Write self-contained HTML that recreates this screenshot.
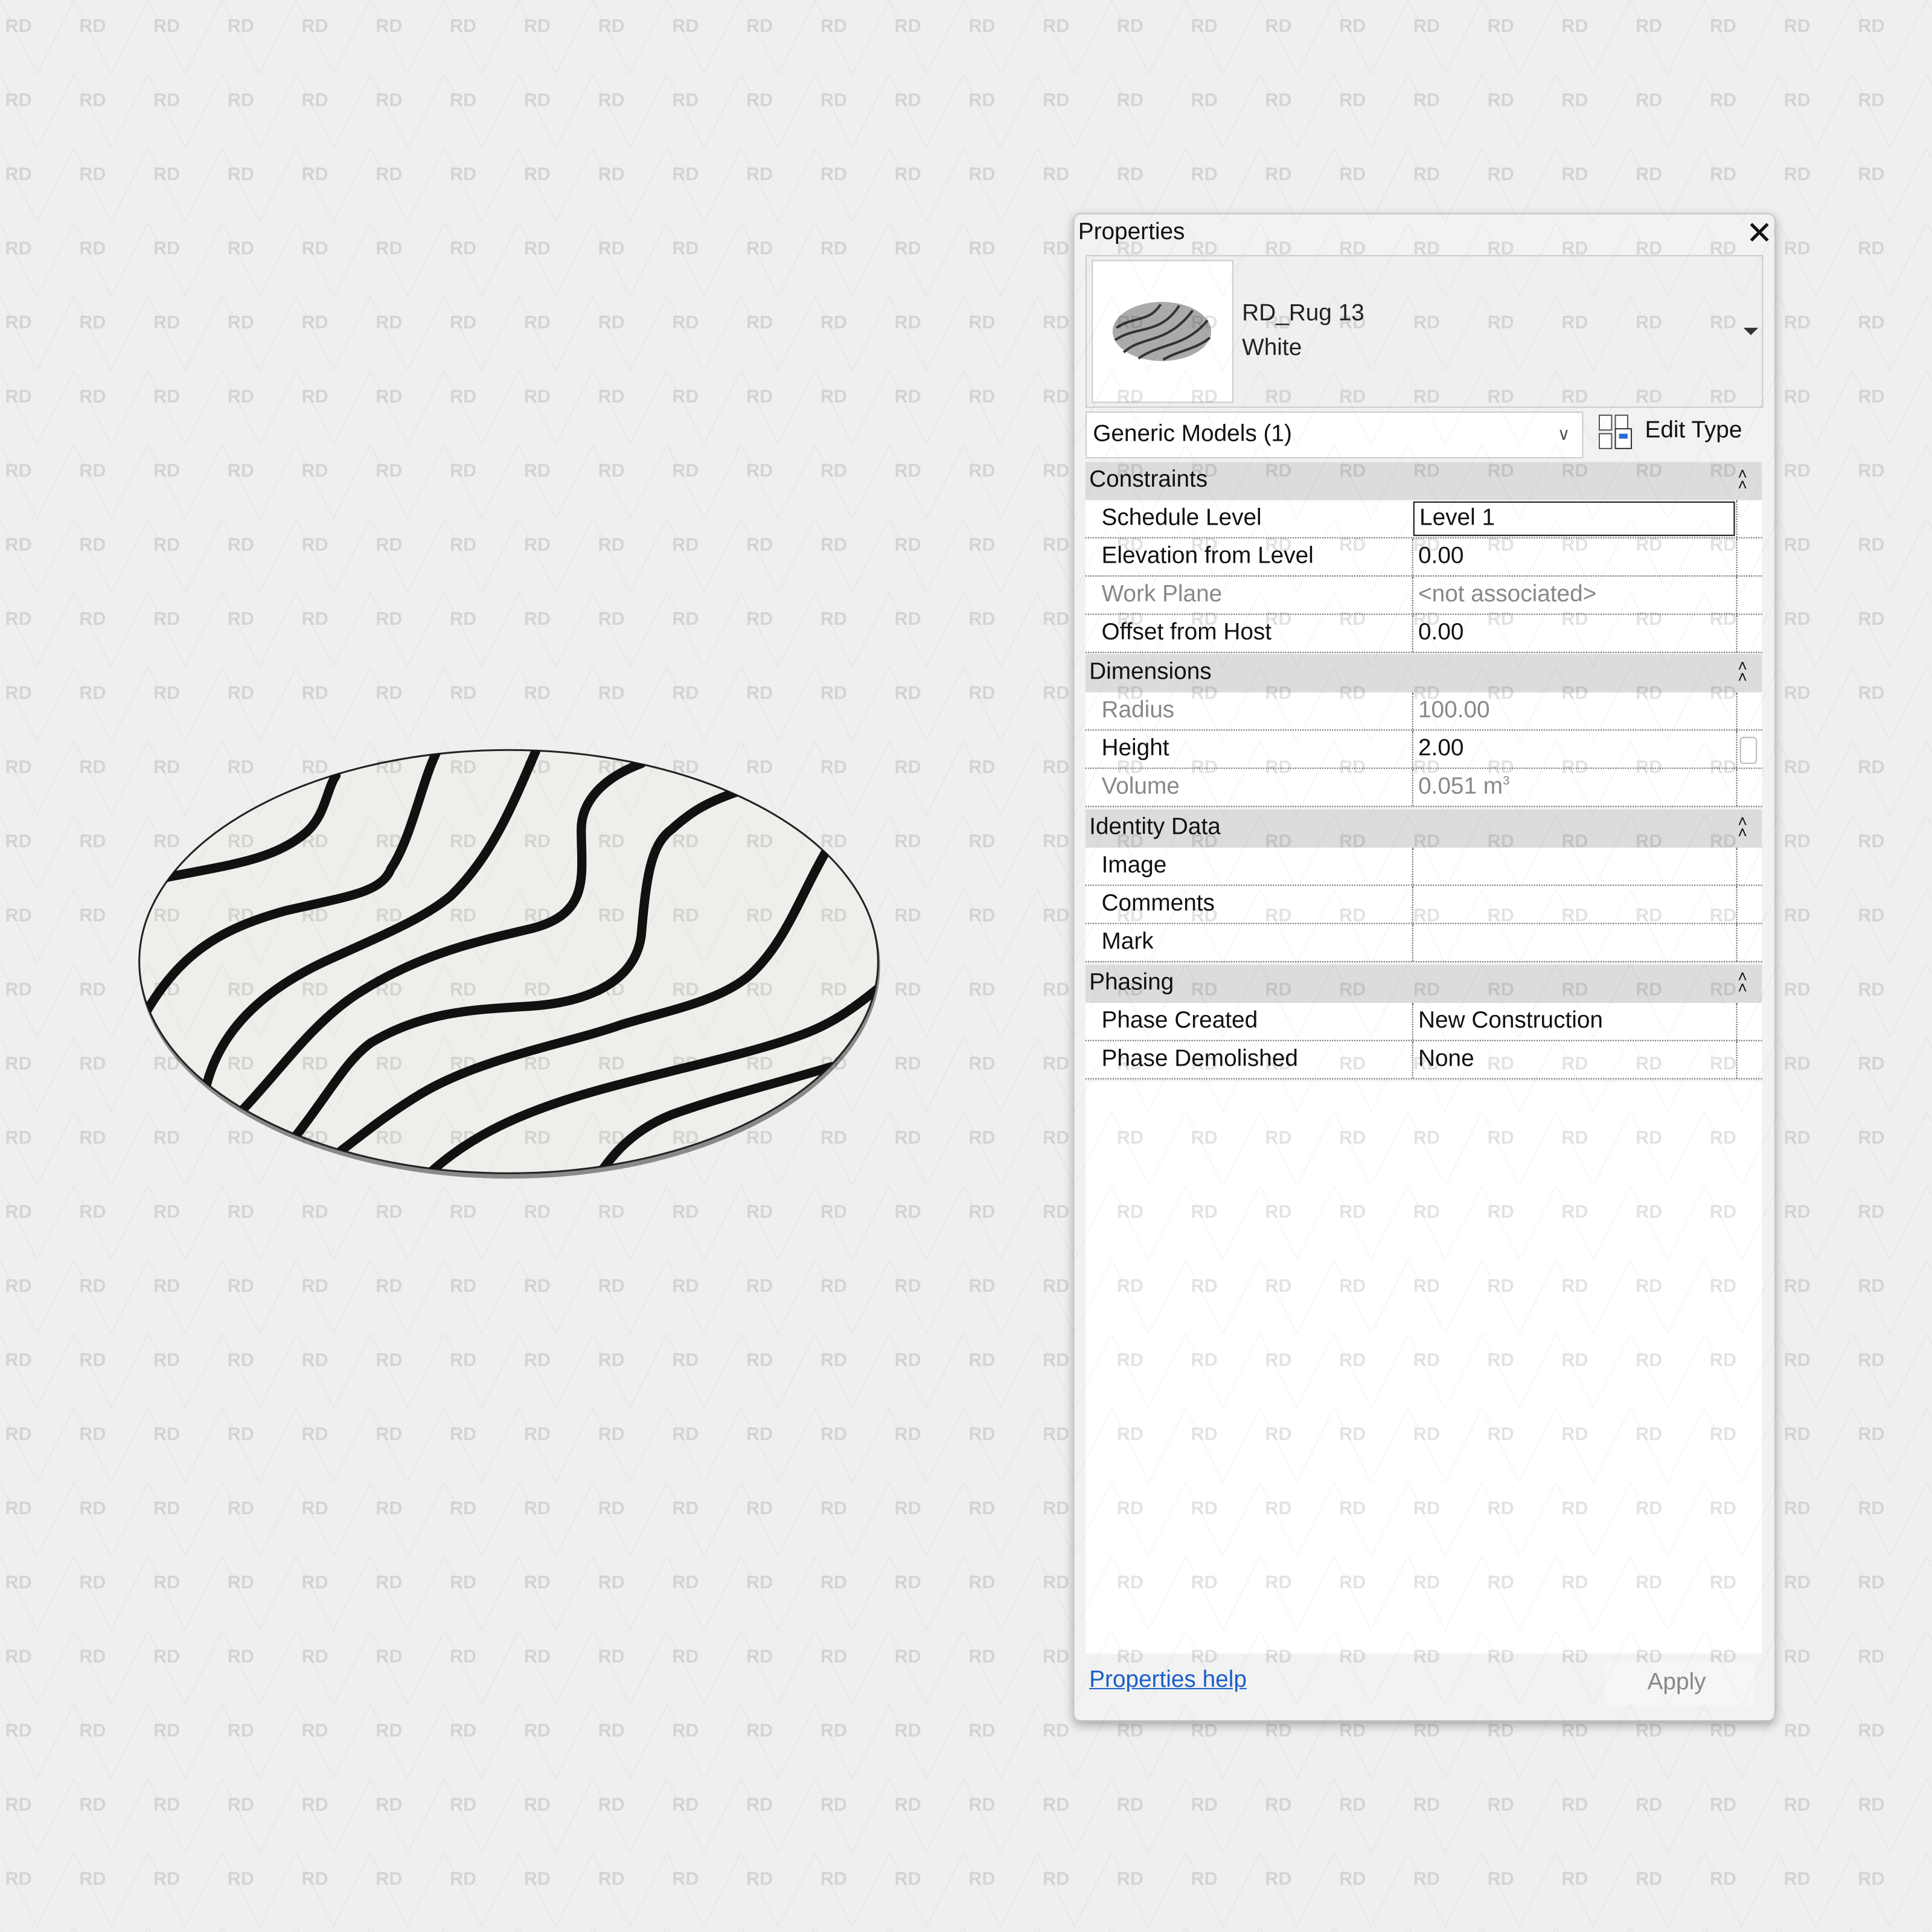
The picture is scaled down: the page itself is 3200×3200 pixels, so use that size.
<!DOCTYPE html>
<html><head><meta charset="utf-8"><style>
html,body{margin:0;padding:0;width:3200px;height:3200px;overflow:hidden;background:#efefef}
#w{position:absolute;left:0;top:0;width:1568px;height:1568px;transform:scale(2.040816);transform-origin:0 0;font-family:"Liberation Sans",sans-serif}
.a{position:absolute}
#panel{left:871px;top:173px;width:568px;height:1222px;background:#f2f2f2;border:1px solid #c8c8c8;border-radius:6px;box-shadow:0 3px 8px rgba(0,0,0,.3)}
.t{font-size:19px;color:#111;white-space:nowrap}
.hdr{position:absolute;left:9px;width:549px;height:31px;background:#dcdcdc}
.hdr span{position:absolute;left:3px;top:4px;font-size:19px;color:#111}
.hdr i{position:absolute;right:12px;top:5px;font-style:normal;font-size:13px;line-height:9px;color:#111}
.row{position:absolute;left:9px;width:549px;height:30px;background:#fff;border-bottom:1px dotted #666}
.row .l{position:absolute;left:13px;top:4px;font-size:19px;color:#111}
.row .v{position:absolute;left:270px;top:4px;font-size:19px;color:#111}
.row .d{position:absolute;left:265px;top:0;height:30px;border-left:1px dotted #666}
.row .e{position:absolute;left:528px;top:0;height:30px;border-left:1px dotted #666}
.g{color:#888!important}
</style></head><body>
<div id="w">
<svg class="a" style="left:98px;top:588px" width="637" height="382" viewBox="0 0 1568 1568" preserveAspectRatio="none">
<defs><clipPath id="c"><ellipse cx="775" cy="790" rx="738" ry="705"/></clipPath></defs>
<ellipse cx="777" cy="805" rx="740" ry="708" fill="#8a8a8a"/>
<ellipse cx="775" cy="790" rx="738" ry="705" fill="#eeeeea" stroke="#222" stroke-width="1.5" vector-effect="non-scaling-stroke"/>
<g clip-path="url(#c)" fill="none" stroke="#111" stroke-width="7.5" stroke-linecap="round">
<path vector-effect="non-scaling-stroke" d="M60,520 C200,470 300,460 370,360 C410,300 410,220 430,170"/>
<path vector-effect="non-scaling-stroke" d="M50,960 C120,760 200,680 330,620 C460,570 520,560 540,480 C580,380 600,200 630,95"/>
<path vector-effect="non-scaling-stroke" d="M170,1210 C200,1000 300,870 420,780 C540,690 610,640 660,570 C740,440 780,280 830,85"/>
<path vector-effect="non-scaling-stroke" d="M240,1290 C320,1150 380,1000 470,900 C600,760 720,720 820,680 C940,630 920,500 920,350 C920,260 960,180 1040,130"/>
<path vector-effect="non-scaling-stroke" d="M350,1370 C420,1220 450,1120 500,1060 C600,960 700,950 800,940 C950,930 1030,840 1040,700 C1050,500 1060,400 1100,350 C1140,290 1170,260 1230,225"/>
<path vector-effect="non-scaling-stroke" d="M440,1420 C480,1370 530,1300 600,1230 C720,1110 900,1060 1000,1000 C1100,950 1200,920 1260,830 C1330,720 1360,560 1410,420"/>
<path vector-effect="non-scaling-stroke" d="M620,1490 C700,1370 800,1290 950,1220 C1100,1150 1250,1100 1350,1040 C1420,1000 1460,950 1520,870"/>
<path vector-effect="non-scaling-stroke" d="M940,1540 C970,1460 1010,1360 1100,1300 C1200,1240 1300,1200 1420,1140"/>
</g>
</svg>

<div id="panel" class="a">
<div class="a t" style="left:3px;top:4px">Properties</div>
<div class="a" style="left:545px;top:0px;font-size:26px;color:#111">✕</div>
<div class="a" style="left:9px;top:33px;width:548px;height:122px;border:1px solid #ccc;background:#efefef"></div>
<div class="a" style="left:14px;top:37px;width:113px;height:114px;background:#fff;border:1px solid #ccc"></div>
<svg class="a" style="left:30px;top:70px" width="82" height="50"><ellipse cx="41" cy="25" rx="40" ry="24" fill="#aaa"/><g fill="none" stroke="#333" stroke-width="2"><path d="M4,22 C20,12 30,18 40,3"/><path d="M3,32 C20,20 40,28 55,4"/><path d="M10,42 C25,28 45,36 66,8"/><path d="M22,47 C40,34 60,38 78,16"/><path d="M42,48 C55,40 68,40 80,30"/></g></svg>
<div class="a t" style="left:136px;top:70px;color:#222">RD_Rug 13</div>
<div class="a t" style="left:136px;top:98px;color:#222">White</div>
<div class="a" style="left:543px;top:92px;width:0;height:0;border-left:6px solid transparent;border-right:6px solid transparent;border-top:6px solid #333"></div>
<div class="a" style="left:9px;top:160px;width:402px;height:36px;background:#fff;border:1px solid #ccc"></div>
<div class="a t" style="left:15px;top:168px">Generic Models (1)</div>
<div class="a" style="left:392px;top:170px;font-size:14px;color:#555">∨</div>
<svg class="a" style="left:425px;top:162px" width="30" height="30"><rect x="1" y="1" width="10" height="12" fill="#fff" stroke="#555"/><rect x="1" y="16" width="10" height="12" fill="#fff" stroke="#555"/><rect x="14" y="1" width="10" height="12" fill="#fff" stroke="#555"/><rect x="14" y="12" width="13" height="16" fill="#fff" stroke="#333"/><rect x="17" y="16" width="7" height="4" fill="#2a6bd1"/></svg>
<div class="a t" style="left:463px;top:165px">Edit Type</div>

<div class="hdr" style="top:201px"><span>Constraints</span><i>˄<br>˄</i></div>
<div class="row" style="top:232px"><span class="l">Schedule Level</span><div class="a" style="left:266px;top:1px;width:259px;height:26px;border:1.5px solid #111;background:#fff"></div><span class="v" style="left:271px">Level 1</span><div class="e"></div></div>
<div class="row" style="top:263px"><span class="l">Elevation from Level</span><div class="d"></div><span class="v">0.00</span><div class="e"></div></div>
<div class="row" style="top:294px"><span class="l g">Work Plane</span><div class="d"></div><span class="v g">&lt;not associated&gt;</span><div class="e"></div></div>
<div class="row" style="top:325px"><span class="l">Offset from Host</span><div class="d"></div><span class="v">0.00</span><div class="e"></div></div>
<div class="hdr" style="top:357px"><span>Dimensions</span><i>˄<br>˄</i></div>
<div class="row" style="top:388px"><span class="l g">Radius</span><div class="d"></div><span class="v g">100.00</span><div class="e"></div></div>
<div class="row" style="top:419px"><span class="l">Height</span><div class="d"></div><span class="v">2.00</span><div class="e"></div><div class="a" style="left:531px;top:5px;width:12px;height:20px;border:1px solid #bbb;border-radius:3px"></div></div>
<div class="row" style="top:450px"><span class="l g">Volume</span><div class="d"></div><span class="v g">0.051 m<sup style="font-size:10px">3</sup></span><div class="e"></div></div>
<div class="hdr" style="top:483px"><span>Identity Data</span><i>˄<br>˄</i></div>
<div class="row" style="top:514px"><span class="l">Image</span><div class="d"></div><div class="e"></div></div>
<div class="row" style="top:545px"><span class="l">Comments</span><div class="d"></div><div class="e"></div></div>
<div class="row" style="top:576px"><span class="l">Mark</span><div class="d"></div><div class="e"></div></div>
<div class="hdr" style="top:609px"><span>Phasing</span><i>˄<br>˄</i></div>
<div class="row" style="top:640px"><span class="l">Phase Created</span><div class="d"></div><span class="v">New Construction</span><div class="e"></div></div>
<div class="row" style="top:671px"><span class="l">Phase Demolished</span><div class="d"></div><span class="v">None</span><div class="e"></div></div>
<div class="a" style="left:9px;top:704px;width:549px;height:464px;background:#fff"></div>
<div class="a t" style="left:12px;top:1179px;color:#1a5fc8;text-decoration:underline">Properties help</div>
<div class="a" style="left:430px;top:1174px;width:122px;height:36px;background:#f6f6f6;border-radius:4px"></div>
<div class="a t" style="left:465px;top:1181px;color:#888">Apply</div>
</div>

<svg class="a" style="left:0;top:0" width="1568" height="1568">
<defs><pattern id="p" x="0" y="0" width="60.15" height="60.15" patternUnits="userSpaceOnUse">
<path d="M0,0 L30,60 M60,0 L30,60" stroke="rgba(0,0,0,0.03)" stroke-width="1" fill="none"/>
<text x="15" y="26" font-family="Liberation Sans,sans-serif" font-size="15" font-weight="bold" fill="rgba(0,0,0,0.11)" text-anchor="middle">RD</text>
</pattern></defs>
<rect width="1568" height="1568" fill="url(#p)"/>
</svg>
</div>
</body></html>
